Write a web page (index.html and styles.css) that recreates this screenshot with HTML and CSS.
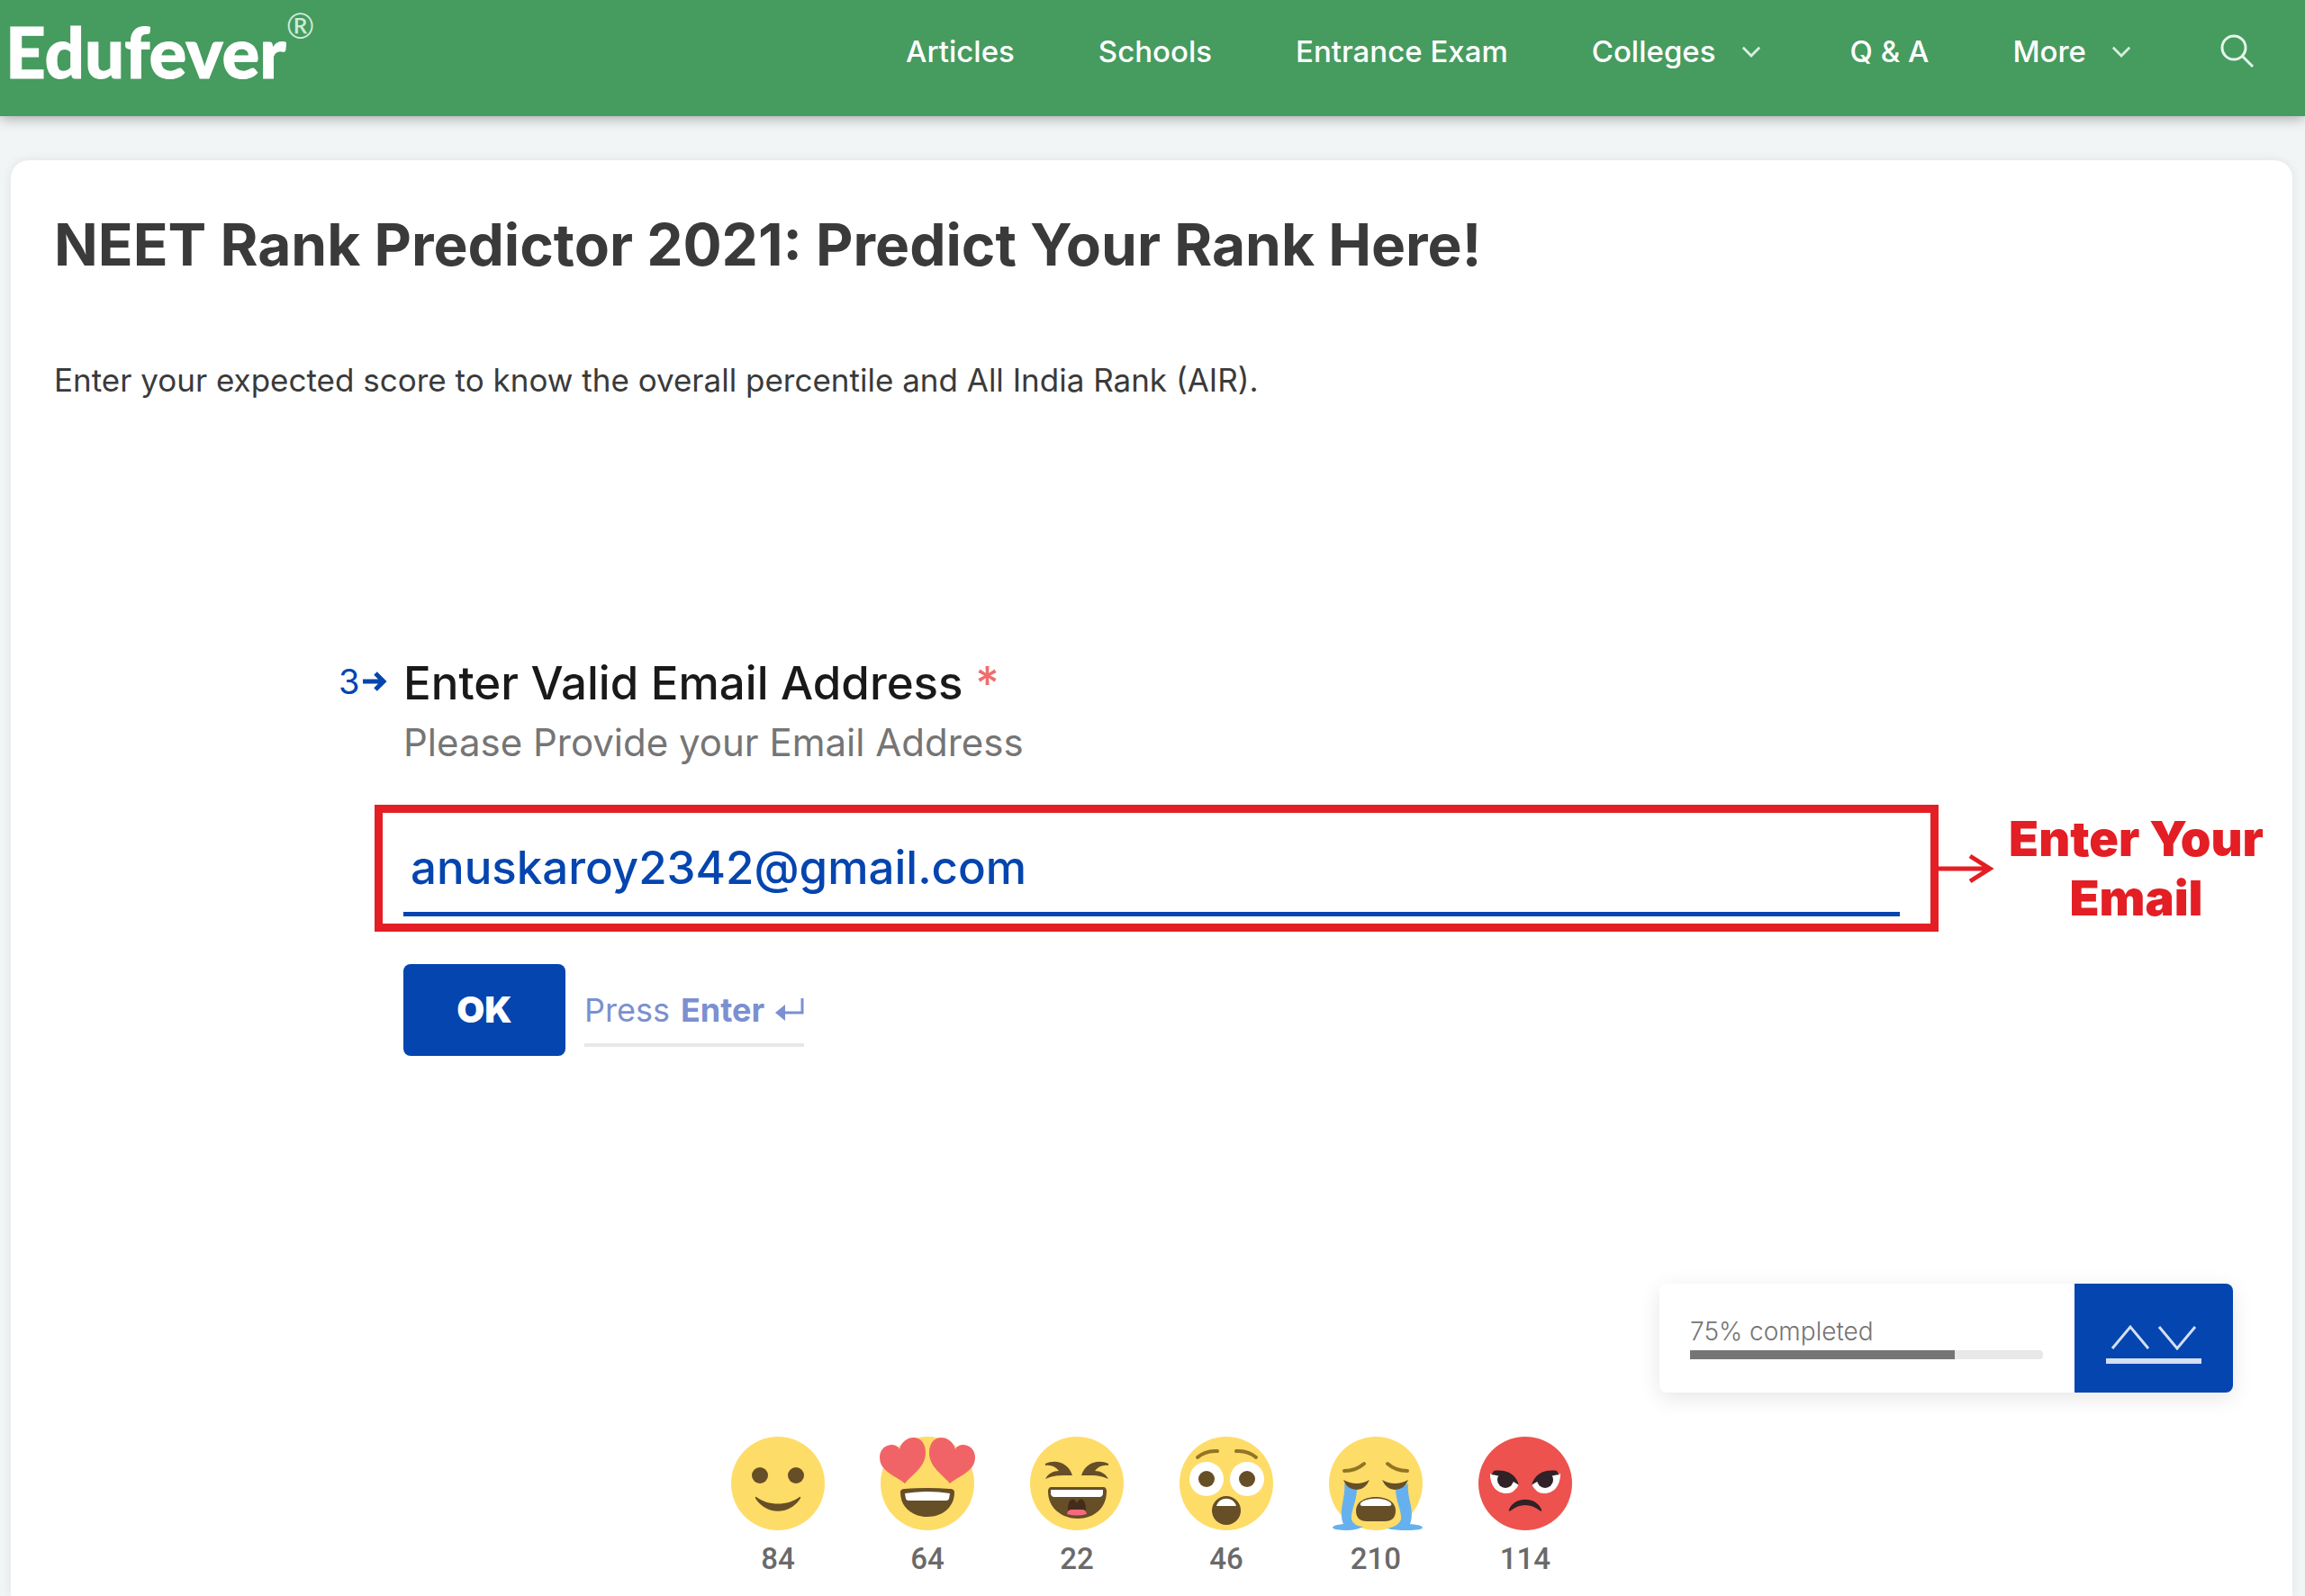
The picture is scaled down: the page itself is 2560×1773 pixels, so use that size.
FILE: index.html
```html
<!DOCTYPE html>
<html lang="en">
<head>
  <meta charset="UTF-8">
  <meta name="viewport" content="width=device-width, initial-scale=1">
  <title>NEET Rank Predictor 2021</title>
  <link rel="stylesheet" href="styles.css">
</head>
<body>
  <header class="site-header">
    <a class="logo" href="#">Edufever<sup>®</sup></a>
    <nav class="main-nav">
      <a href="#">Articles</a>
      <a href="#">Schools</a>
      <a href="#">Entrance Exam</a>
      <a class="has-menu" href="#">Colleges
        <svg class="caret" viewBox="0 0 24 14"><path d="M2 2l10 10L22 2"/></svg>
      </a>
      <a href="#">Q &amp; A</a>
      <a class="has-menu" href="#">More
        <svg class="caret" viewBox="0 0 24 14"><path d="M2 2l10 10L22 2"/></svg>
      </a>
      <button class="search" type="button" aria-label="Search">
        <svg viewBox="0 0 38 38"><circle cx="15" cy="15" r="13"/><path d="M24 24l12 12"/></svg>
      </button>
    </nav>
  </header>

  <main class="card">
    <h1>NEET Rank Predictor 2021: Predict Your Rank Here!</h1>
    <p class="intro">Enter your expected score to know the overall percentile and All India Rank (AIR).</p>

    <form class="question">
      <div class="question-head">
        <span class="number">3<svg viewBox="0 0 26 24"><path d="M0 12h22M14 3l9 9-9 9"/></svg></span>
        <div>
          <label for="email">Enter Valid Email Address <span class="required">*</span></label>
          <p class="hint">Please Provide your Email Address</p>
        </div>
      </div>

      <div class="answer">
        <div class="highlight">
          <input type="email" id="email" value="anuskaroy2342@gmail.com">
        </div>
        <svg class="pointer" viewBox="0 0 62 34"><path d="M0 17h54M35 3l22 14-22 14"/></svg>
        <strong class="note">Enter Your Email</strong>
      </div>

      <div class="actions">
        <button class="ok" type="button">OK</button>
        <span class="press">Press <b>Enter</b>
          <svg viewBox="0 0 32 26"><path d="M30 0v16H8"/><path class="head" d="M0 16l11-9v18z"/></svg>
        </span>
      </div>
    </form>

    <div class="progress">
      <div class="progress-info">
        <span>75% completed</span>
        <div class="track"><div class="fill" style="width: 75%"></div></div>
      </div>
      <div class="progress-nav">
        <div class="arrows">
          <button type="button" aria-label="Previous"><svg viewBox="0 0 44 28"><path d="M2 26L22 2l20 24"/></svg></button>
          <button type="button" aria-label="Next"><svg viewBox="0 0 44 28"><path d="M2 2l20 24L42 2"/></svg></button>
        </div>
      </div>
    </div>

    <div class="reactions">
      <button type="button">
        <svg viewBox="0 0 104 104">
          <circle class="face" cx="52" cy="52" r="52"/>
          <circle class="brown" cx="32" cy="43" r="9"/>
          <circle class="brown" cx="72" cy="43" r="9"/>
          <path class="brown" d="M28 67c-2-1-1 2 0 3 12 17 36 17 48 0 1-1 2-4 0-3-13 10-35 10-48 0z"/>
        </svg>
        84
      </button>
      <button type="button">
        <svg viewBox="0 0 104 104">
          <circle class="face" cx="52" cy="52" r="52"/>
          <path class="heart" d="M27 52C18 44-1 39-1 23-1 8 17 5 21 14 25-3 50-5 50 18c0 16-16 25-23 34z"/>
          <path class="heart" d="M77 52c9-8 28-13 28-29C105 8 87 5 83 14 79-3 54-5 54 18c0 16 16 25 23 34z"/>
          <path class="brown" d="M22 62c0-3 2-4 5-4q25-2 50 0c3 0 5 1 5 4 0 16-13 27-30 27S22 78 22 62z"/>
          <path class="white" d="M27 63q25-4 50 0l-1 6q-1 2-3 2H31q-2 0-3-2z"/>
        </svg>
        64
      </button>
      <button type="button">
        <svg viewBox="0 0 104 104">
          <circle class="face" cx="52" cy="52" r="52"/>
          <path class="brown" d="M17 30c11-5 25-2 30 13-9 0-21-1-30 4 3-6 9-9 15-9-4-5-9-7-15-6z"/>
          <path class="brown" d="M87 30c-11-5-25-2-30 13 9 0 21-1 30 4-3-6-9-9-15-9 4-5 9-7 15-6z"/>
          <path class="brown" d="M20 61c0-3 1-5 4-5h57c3 0 4 2 4 5 0 18-14 30-32 30S20 79 20 61z"/>
          <path class="white" d="M23 59h58v5q-1 3-3 3H26q-2 0-3-3z"/>
          <path class="throat" d="M42 82c0-16 8-14 10-8 2-6 10-8 10 8z"/>
          <path class="tongue" d="M41 86q1-5 5-5h12q4 0 5 5-11 3-22 0z"/>
        </svg>
        22
      </button>
      <button type="button">
        <svg viewBox="0 0 104 104">
          <circle class="face" cx="52" cy="52" r="52"/>
          <path class="brow" d="M20 23q9-8 22-7M85 23q-9-8-22-7"/>
          <circle class="white" cx="30" cy="47" r="19"/>
          <circle class="white" cx="75" cy="47" r="19"/>
          <circle class="brown" cx="30" cy="47" r="9"/>
          <circle class="brown" cx="75" cy="47" r="9"/>
          <circle class="brown" cx="52" cy="82" r="16"/>
          <path class="white" d="M41 77c3-11 19-11 22 0z"/>
        </svg>
        46
      </button>
      <button type="button">
        <svg viewBox="0 0 104 104">
          <circle class="face" cx="52" cy="52" r="52"/>
          <path class="brow" d="M17 38q13 0 22-8M87 38q-13 0-22-8"/>
          <path class="tear" d="M17 52q8 6 14 6c0 14-7 24-6 34q2 7 13 8-8 4-17 4-16 0-17-3 0-3 12-4c-6-15 3-30 1-45z"/>
          <path class="tear" d="M88 52q-8 6-14 6c0 14 7 24 6 34q-2 7-15 10 8 2 21 2 18 0 18-3 0-3-14-4c6-15-4-30-2-45z"/>
          <path class="brown" d="M16 48q15 8 29 0-5 11-14 11-11 0-15-11zM88 48q-15 8-29 0 5 11 14 11 11 0 15-11z"/>
          <path class="brown" d="M30 82c0-20 44-20 44 0 0 8-4 12-12 12H42c-8 0-12-4-12-12z"/>
          <path class="white" d="M37 77q-3 0-2-3c6-7 28-7 34 0q1 3-2 3z"/>
        </svg>
        210
      </button>
      <button type="button">
        <svg viewBox="0 0 104 104">
          <circle class="angry" cx="52" cy="52" r="52"/>
          <path class="white" d="M13 41q16-1 32 12-5 10-14 10c-12 0-18-10-18-22zM91 41q-16-1-32 12 5 10 14 10c12 0 18-10 18-22z"/>
          <circle class="dark" cx="30" cy="48" r="9"/>
          <circle class="dark" cx="74" cy="48" r="9"/>
          <path class="dark" d="M17 38c14-2 25 4 28 16-8-6-20-11-32-12 2 0 3-2 4-4zM87 38c-14-2-25 4-28 16 8-6 20-11 32-12-2 0-3-2-4-4z"/>
          <path class="dark" d="M34 81c6-15 30-15 36 0 1 2-1 2-2 1-10-8-22-8-32 0-1 1-3 1-2-1z"/>
        </svg>
        114
      </button>
    </div>
  </main>
</body>
</html>
```

FILE: styles.css
```css
* {
    box-sizing: border-box;
}
body {
    margin: 0;
    min-height: 100vh;
    display: flex;
    flex-direction: column;
    font-family: Inter, "Liberation Sans", sans-serif;
    background-color: #f2f5f6;
    color: #3a3a3a;
}
h1, p {
    margin: 0;
}
button {
    padding: 0;
    border: none;
    background: none;
    font-family: inherit;
    color: inherit;
    cursor: pointer;
}
svg {
    display: block;
    flex: none;
    overflow: visible;
    fill: none;
}

/* header */
.site-header {
    display: flex;
    align-items: center;
    justify-content: space-between;
    padding: 0 56px 15px 6px;
    background-color: #469b5f;
    box-shadow: 0 2px 14px rgba(0, 0, 0, 0.35);
    color: #fff;
}
.site-header a {
    color: inherit;
    text-decoration: none;
}
.logo {
    display: flex;
    font-family: Lato, sans-serif;
    font-size: 78px;
    font-weight: 900;
    line-height: 114px;
    -webkit-text-stroke: 1px #fff;
}
.logo sup {
    font-size: 38px;
    font-weight: 400;
    line-height: 56px;
    color: #cdebd6;
    -webkit-text-stroke: 0;
}
.main-nav {
    display: flex;
    align-items: center;
    gap: 93px;
    font-size: 33px;
    font-weight: 500;
}
.main-nav a {
    display: flex;
    align-items: center;
    gap: 28px;
}
.main-nav .has-menu {
    margin-right: 6px;
}
.caret {
    width: 22px;
    stroke: #d8f0df;
    stroke-width: 3;
}
.search svg {
    width: 38px;
    stroke: #e4f7ea;
    stroke-width: 3;
}

/* content card */
.card {
    flex: 1;
    display: flex;
    flex-direction: column;
    margin: 49px 14px 0 12px;
    padding: 54px 0 22px;
    border-radius: 20px 20px 0 0;
    background-color: #fff;
    box-shadow: 0 0 12px rgba(0, 0, 0, 0.08);
}
h1 {
    padding: 0 48px;
    font-size: 64px;
    line-height: 80px;
}
.intro {
    margin-top: 82px;
    padding: 0 48px;
    font-size: 35px;
    line-height: 56px;
}

/* question */
.question {
    margin-top: 273px;
}
.question-head {
    display: flex;
    padding-left: 364px;
}
.number {
    display: flex;
    align-items: center;
    gap: 4px;
    width: 72px;
    height: 68px;
    font-size: 38px;
    color: #0445af;
}
.number svg {
    width: 26px;
    stroke: #0445af;
    stroke-width: 5;
}
.question-head label {
    display: block;
    font-size: 51px;
    font-weight: 500;
    line-height: 72px;
    color: #191919;
}
.required {
    color: #ee6e6e;
}
.hint {
    font-size: 42px;
    line-height: 60px;
    color: #757575;
}
.answer {
    display: flex;
    align-items: center;
    margin-top: 39px;
    padding: 0 26px 0 404px;
}
.highlight {
    flex: 1;
    padding: 15px 34px 8px 23px;
    border: 9px solid #e31e24;
}
.highlight input {
    display: block;
    width: 100%;
    height: 100px;
    padding: 0 8px 4px;
    border: none;
    border-bottom: 5px solid #0445af;
    outline: none;
    background: none;
    font-family: inherit;
    font-size: 51px;
    font-weight: 500;
    color: #0445af;
}
.pointer {
    width: 62px;
    stroke: #e31e24;
    stroke-width: 5;
}
.note {
    width: 295px;
    margin-left: 10px;
    font-size: 54px;
    font-weight: 900;
    line-height: 66px;
    text-align: center;
    color: #e31e24;
}
.actions {
    display: flex;
    gap: 21px;
    margin-top: 36px;
    padding-left: 436px;
}
.ok {
    width: 180px;
    height: 102px;
    padding-bottom: 2px;
    border-radius: 8px;
    background-color: #0445af;
    font-size: 40px;
    font-weight: 900;
    color: #fff;
}
.press {
    display: flex;
    align-items: center;
    gap: 12px;
    height: 92px;
    padding-top: 14px;
    border-bottom: 4px solid #e8e8e8;
    font-size: 36px;
    color: #7b90d0;
}
.press b {
    font-weight: 700;
}
.press svg {
    width: 32px;
    stroke: #7b90d0;
    stroke-width: 3;
}
.press .head {
    fill: #7b90d0;
    stroke: none;
}

/* progress */
.progress {
    display: flex;
    align-self: flex-end;
    margin: 253px 66px 0 0;
    border-radius: 8px;
    box-shadow: 0 6px 24px rgba(0, 0, 0, 0.1);
}
.progress-info {
    width: 461px;
    padding: 36px 35px 0 34px;
    font-size: 28px;
    font-weight: 300;
    line-height: 34px;
    color: #757575;
}
.track {
    height: 10px;
    margin-top: 4px;
    border-radius: 4px;
    background-color: #e8e8e8;
}
.fill {
    height: 10px;
    background-color: #757575;
}
.progress-nav {
    width: 176px;
    padding: 46px 35px 32px;
    border-radius: 0 8px 8px 0;
    background-color: #0445af;
}
.arrows {
    display: flex;
    justify-content: space-between;
    padding: 0 5px 9px;
    border-bottom: 6px solid #d4dff2;
}
.arrows svg {
    width: 44px;
    stroke: #d4dff2;
    stroke-width: 3;
}

/* reactions */
.reactions {
    display: flex;
    justify-content: center;
    gap: 62px;
    margin-top: 49px;
}
.reactions button {
    width: 104px;
    font-family: Roboto, sans-serif;
    font-size: 33px;
    font-weight: 500;
    line-height: 40px;
    color: #6a6a6a;
}
.reactions svg {
    margin-bottom: 12px;
}
.face {
    fill: #fedc68;
}
.angry {
    fill: #ed524f;
}
.brown {
    fill: #664e27;
}
.white {
    fill: #fff;
}
.heart {
    fill: #f06468;
}
.tear {
    fill: #65b1ef;
}
.tongue {
    fill: #f7697e;
}
.throat {
    fill: #442c1c;
}
.dark {
    fill: #302226;
}
.brow {
    stroke: #917524;
    stroke-width: 4;
    stroke-linecap: round;
}
```
